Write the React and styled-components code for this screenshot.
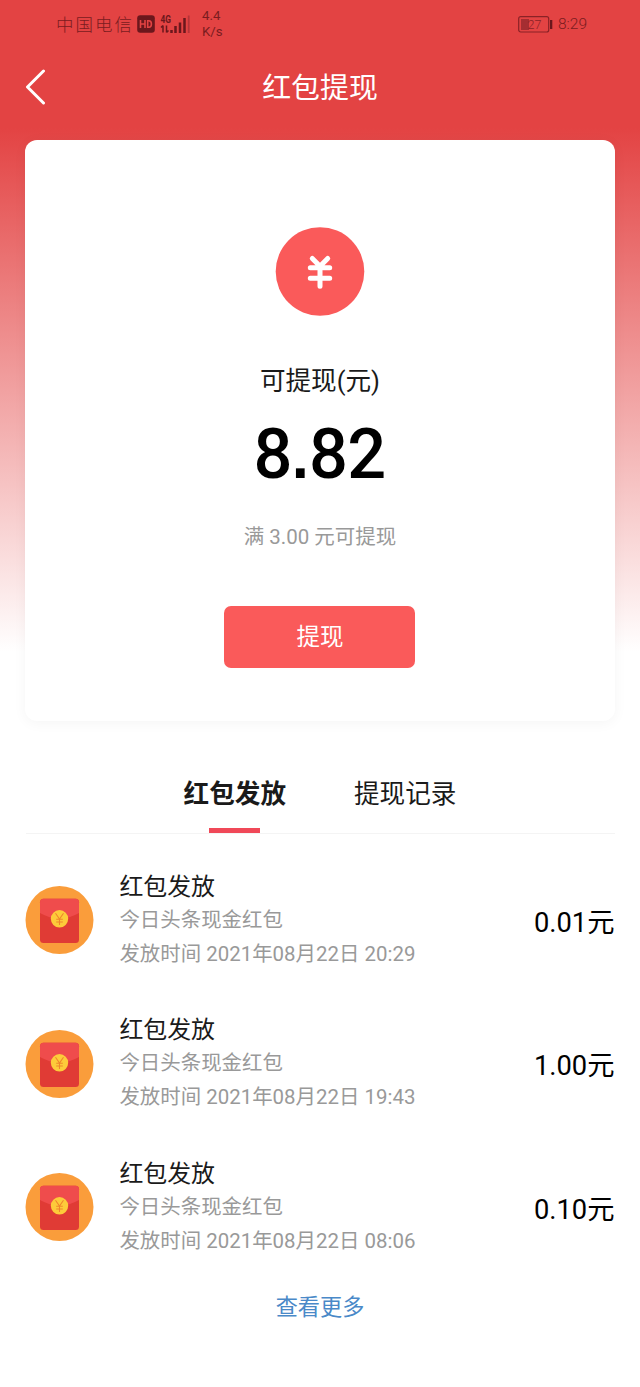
import React from "react";
import styled, { createGlobalStyle } from "styled-components";

const GlobalStyle = createGlobalStyle`
  * { box-sizing: border-box; }
  body {
    margin: 0;
    background: #fff;
    font-family: Roboto, "Noto Sans CJK SC", sans-serif;
    color: #1a1a1a;
  }
`;

const Page = styled.div`
  width: 640px;
  height: 1387px;
  overflow: hidden;
  background: linear-gradient(#e34343 0, #e34343 128px, #fff 652px);
`;

const StatusBar = styled.header`
  height: 48px;
  padding: 0 53px 0 56px;
  display: flex;
  align-items: center;
  justify-content: space-between;
  color: #7a1c20;
`;

const StatusGroup = styled.div`
  display: flex;
  align-items: center;
`;

const Carrier = styled.span`
  width: 81px;
  padding-top: 2px;
  font-size: 17.5px;
  font-weight: 300;
  letter-spacing: 2px;
  line-height: 24px;
  white-space: nowrap;
`;

const Speed = styled.span`
  margin-left: 11px;
  width: 22px;
  font-size: 13.2px;
  line-height: 16px;
`;

const Clock = styled.span`
  margin-left: 5px;
  width: 29px;
  font-size: 15.5px;
  font-weight: 300;
  line-height: 20px;
  white-space: nowrap;
`;

const NavBar = styled.nav`
  height: 92px;
  padding: 0 24px 14px;
  display: grid;
  grid-template-columns: 24px 1fr 24px;
  align-items: center;
`;

const NavTitle = styled.h1`
  margin: 0;
  padding-top: 2px;
  font-size: 28.9px;
  font-weight: 400;
  line-height: 40px;
  color: #fff;
  text-align: center;
`;

const Card = styled.section`
  height: 580.6px;
  margin: 0 25.5px 0 25.4px;
  padding-top: 87px;
  display: flex;
  flex-direction: column;
  align-items: center;
  background: #fff;
  border-radius: 12px;
  box-shadow: 0 2px 14px rgba(0, 0, 0, 0.045);
`;

const Label = styled.div`
  margin-top: 46px;
  font-size: 25.6px;
  line-height: 38px;
`;

const Balance = styled.div`
  margin-top: 14px;
  font-size: 71px;
  font-weight: 500;
  line-height: 80px;
  letter-spacing: -0.6px;
  color: #000;
  transform: scaleX(0.965);
`;

const DecimalPoint = styled.span`
  font-family: "Liberation Sans", sans-serif;
  font-size: 64px;
  font-weight: 700;
  line-height: 1;
  letter-spacing: 0;
`;

const Hint = styled.div`
  margin-top: 27.5px;
  font-size: 20.5px;
  line-height: 30px;
  color: #999;
`;

const WithdrawButton = styled.button`
  margin-top: 54.5px;
  width: 191px;
  height: 62px;
  padding: 0;
  border: 0;
  border-radius: 7px;
  background: #fa5a5a;
  color: #fff;
  font: 400 23.5px/62px Roboto, "Noto Sans CJK SC", sans-serif;
`;

const Tabs = styled.div`
  height: 113px;
  margin: 0 25.5px;
  padding-top: 53px;
  display: flex;
  justify-content: center;
  gap: 68px;
  border-bottom: 1px solid #f4f4f4;
`;

const Tab = styled.div`
  display: flex;
  flex-direction: column;
  align-items: center;
  justify-content: space-between;
  font-size: 25.6px;
  line-height: 40px;
  font-weight: ${(p) => (p.$active ? 700 : 400)};

  &::after {
    content: "";
    width: 51px;
    height: 5px;
    background: ${(p) => (p.$active ? "#f04858" : "transparent")};
  }
`;

const List = styled.ul`
  list-style: none;
  margin: 0;
  padding: 15px 25.5px 0 25.4px;
`;

const Row = styled.li`
  height: 143.4px;
  display: flex;
  align-items: center;
`;

const Details = styled.div`
  flex: 1;
  margin-left: 25px;
  padding: 1.8px 0 0.8px;
`;

const RowTitle = styled.div`
  font-size: 23.9px;
  line-height: 32px;
`;

const RowNote = styled.div`
  font-size: 20.45px;
  line-height: 34px;
  color: #999;
  white-space: nowrap;
`;

const Amount = styled.div`
  font-size: 27.3px;
  line-height: 40px;
  color: #000;
  padding-top: 5px;
`;

const More = styled.a`
  display: block;
  margin-top: 12px;
  text-align: center;
  font-size: 22.2px;
  line-height: 32px;
  color: #4a89c8;
`;

const records = [
  { time: "2021年08月22日 20:29", amount: "0.01元" },
  { time: "2021年08月22日 19:43", amount: "1.00元" },
  { time: "2021年08月22日 08:06", amount: "0.10元" },
];

function HdBadge() {
  return (
    <svg width="18" height="18" viewBox="0 0 18 18">
      <rect x="0.2" y="0.2" width="17.6" height="17.6" rx="3" fill="#6b171c" />
      <path d="M3.5 5v8M8 5v8M3.5 9H8M10.7 5.7v6.6h1.2q2.5 0 2.5-3.3t-2.5-3.3z" fill="none" stroke="#e34343" strokeWidth="1.6" />
    </svg>
  );
}

const SignalBox = styled.svg`
  margin-left: 5px;
`;

function Signal() {
  return (
    <SignalBox width="31" height="20" viewBox="0 0 31 20">
      <text x="0.5" y="8.5" fontSize="10.5" fontWeight="700" fill="#6b171c" textLength="10.5" lengthAdjust="spacingAndGlyphs">4G</text>
      <path d="M3 11.5v7M1 13.5l2-2M6.5 11.5v7M8.5 16.5l-2 2" stroke="#6b171c" strokeWidth="1.5" fill="none" />
      <path d="M11.5 16v3M15.5 12v7M20 8.5V19M24.5 4V19" stroke="#6b171c" strokeWidth="2.5" />
      <path d="M28.7 1.5V19" stroke="#b53338" strokeWidth="1.8" />
    </SignalBox>
  );
}

function Battery() {
  return (
    <svg width="35" height="17" viewBox="0 0 35 17">
      <rect x="0.7" y="0.7" width="30" height="15.3" rx="2" fill="none" stroke="#8a2226" strokeWidth="1.2" />
      <rect x="3" y="3" width="8" height="11" fill="#a52d31" />
      <text x="9.5" y="12.8" fontSize="12.5" fontWeight="300" fill="#8a2226">27</text>
      <rect x="32" y="4" width="2.3" height="9" fill="#6b171c" />
    </svg>
  );
}

function BackIcon() {
  return (
    <svg width="24" height="36" viewBox="0 0 24 36">
      <path d="M19.5 2 3.5 18 19.5 34" fill="none" stroke="#fff" strokeWidth="3" strokeLinecap="round" strokeLinejoin="round" />
    </svg>
  );
}

function YuanIcon() {
  return (
    <svg width="90" height="89" viewBox="0 0 90 89">
      <circle cx="45" cy="44.5" r="44.3" fill="#fa5a5a" />
      <path d="M37.3 31.5 45 39.2 52.7 31.5M35.3 40.8h19.4M35.3 51.2h19.4M45 40v19.3" fill="none" stroke="#fff" strokeWidth="5" strokeLinecap="round" strokeLinejoin="round" />
    </svg>
  );
}

function PacketIcon() {
  return (
    <svg width="69" height="68" viewBox="0 0 69 68">
      <circle cx="34.5" cy="34" r="34" fill="#fa9d3b" />
      <rect x="15" y="12.7" width="39" height="44.3" rx="3.5" fill="#e03b35" />
      <path d="M15 27V16.2q0-3.5 3.5-3.5h32q3.5 0 3.5 3.5V27Q34.5 38 15 27z" fill="#ef4c4c" />
      <circle cx="34.5" cy="32.8" r="8.7" fill="#fdcb3a" />
      <path d="M30.5 27.3 34.5 33l4-5.7M34.5 33v6M31.2 33.2h6.6M31.2 36h6.6" fill="none" stroke="#f0862c" strokeWidth="1.1" />
    </svg>
  );
}

export default function App() {
  return (
    <Page>
      <GlobalStyle />
      <StatusBar>
        <StatusGroup>
          <Carrier>中国电信</Carrier>
          <HdBadge />
          <Signal />
          <Speed>4.4 K/s</Speed>
        </StatusGroup>
        <StatusGroup>
          <Battery />
          <Clock>8:29</Clock>
        </StatusGroup>
      </StatusBar>
      <NavBar>
        <BackIcon />
        <NavTitle>红包提现</NavTitle>
      </NavBar>
      <Card>
        <YuanIcon />
        <Label>可提现(元)</Label>
        <Balance>8<DecimalPoint>.</DecimalPoint>82</Balance>
        <Hint>满 3.00 元可提现</Hint>
        <WithdrawButton>提现</WithdrawButton>
      </Card>
      <Tabs>
        <Tab $active>红包发放</Tab>
        <Tab>提现记录</Tab>
      </Tabs>
      <List>
        {records.map((r) => (
          <Row key={r.time}>
            <PacketIcon />
            <Details>
              <RowTitle>红包发放</RowTitle>
              <RowNote>今日头条现金红包</RowNote>
              <RowNote>发放时间 {r.time}</RowNote>
            </Details>
            <Amount>{r.amount}</Amount>
          </Row>
        ))}
      </List>
      <More>查看更多</More>
    </Page>
  );
}
